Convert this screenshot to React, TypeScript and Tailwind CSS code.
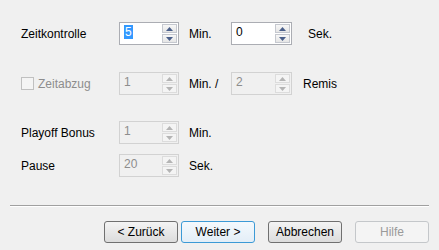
import React from "react";

function Arrow({ up, disabled }: { up?: boolean; disabled?: boolean }) {
  return (
    <svg width="7" height="4" viewBox="0 0 7 4" className="block">
      <path
        d={up ? "M0 4 L3.5 0 L7 4 Z" : "M0 0 L3.5 4 L7 0 Z"}
        fill={disabled ? "#b4b4b4" : "#4a5f8a"}
      />
    </svg>
  );
}

function Spin({
  value,
  disabled,
  selected,
  w = "w-[60px]",
}: {
  value: string;
  disabled?: boolean;
  selected?: boolean;
  w?: string;
}) {
  return (
    <div
      className={`${w} h-[23px] flex border ${
        disabled ? "border-[#d2d2d2] bg-[#f0f0f0]" : "border-[#abadb3] bg-white"
      }`}
    >
      <div
        className={`flex-1 pl-[4px] pt-[1px] text-[12px] leading-[16px] ${
          disabled ? "text-[#8d8d8d]" : "text-black"
        }`}
      >
        {selected ? (
          <span className="bg-[#3399ff] text-white px-[1px]">{value}</span>
        ) : (
          value
        )}
      </div>
      <div className="w-[16px] flex flex-col gap-[1px] p-[1px] pl-0">
        {[true, false].map((up) => (
          <div
            key={String(up)}
            className={`flex-1 flex items-center justify-center border ${
              disabled
                ? "border-[#dcdcdc] bg-[#f4f4f4]"
                : "border-[#c5c8cf] bg-gradient-to-b from-[#f7f7f7] to-[#e6e6e6]"
            }`}
          >
            <Arrow up={up} disabled={disabled} />
          </div>
        ))}
      </div>
    </div>
  );
}

function Btn({
  label,
  variant = "normal",
}: {
  label: string;
  variant?: "normal" | "focus" | "disabled";
}) {
  const cls =
    variant === "focus"
      ? "border-[#3c9ad6] bg-gradient-to-b from-[#f4f9fd] to-[#e3eef7] text-black"
      : variant === "disabled"
      ? "border-[#c4c7ca] bg-[#f4f4f4] text-[#9a9a9a]"
      : "border-[#707070] bg-gradient-to-b from-[#f4f4f4] to-[#dcdcdc] text-black";
  return (
    <button
      className={`w-[74px] h-[22px] rounded-[3px] border text-[12px] leading-none flex items-center justify-center ${cls}`}
    >
      {label}
    </button>
  );
}

export default function App() {
  return (
    <div
      className="w-[439px] h-[250px] bg-[#f0f0f0] text-[12px] text-black flex flex-col"
      style={{ fontFamily: '"Liberation Sans", Arial, sans-serif' }}
    >
      <div className="pl-[21px] pt-[22px]">
        {/* Zeitkontrolle */}
        <div className="flex items-center h-[23px]">
          <div className="w-[98px]">Zeitkontrolle</div>
          <Spin value="5" selected />
          <div className="w-[52px] pl-[10px]">Min.</div>
          <Spin value="0" w="w-[61px]" />
          <div className="pl-[16px]">Sek.</div>
        </div>

        {/* Zeitabzug */}
        <div className="flex items-center h-[23px] mt-[27px]">
          <div className="w-[98px] flex items-center">
            <div className="w-[13px] h-[13px] border border-[#c0c0c0] bg-[#f4f4f4]" />
            <span className="pl-[4px] text-[#8d8d8d]">Zeitabzug</span>
          </div>
          <Spin value="1" disabled />
          <div className="w-[52px] pl-[10px]">Min. /</div>
          <Spin value="2" disabled w="w-[61px]" />
          <div className="pl-[11px]">Remis</div>
        </div>

        {/* Playoff Bonus */}
        <div className="flex items-center h-[23px] mt-[26px]">
          <div className="w-[98px]">Playoff Bonus</div>
          <Spin value="1" disabled />
          <div className="pl-[10px]">Min.</div>
        </div>

        {/* Pause */}
        <div className="flex items-center h-[23px] mt-[10px]">
          <div className="w-[98px]">Pause</div>
          <Spin value="20" disabled />
          <div className="pl-[10px]">Sek.</div>
        </div>
      </div>

      <div className="mx-[10px] mt-[28px] border-t border-[#a0a0a0] border-b border-b-white" />

      <div className="flex justify-end pr-[10px] mt-[14px]">
        <Btn label="< Zurück" />
        <div className="ml-[3px]">
          <Btn label="Weiter >" variant="focus" />
        </div>
        <div className="ml-[13px]">
          <Btn label="Abbrechen" />
        </div>
        <div className="ml-[13px]">
          <Btn label="Hilfe" variant="disabled" />
        </div>
      </div>
    </div>
  );
}
